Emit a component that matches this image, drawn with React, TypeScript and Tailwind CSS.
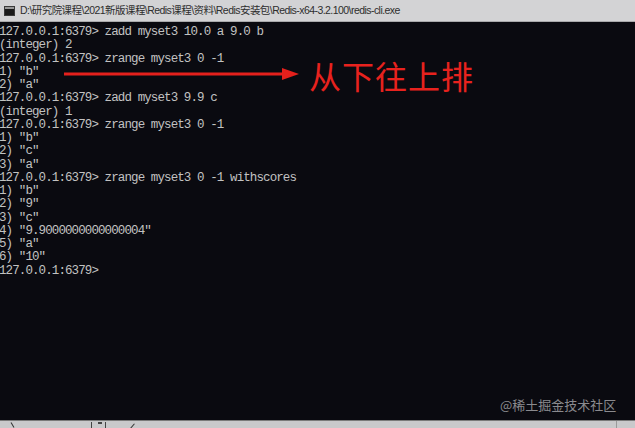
import React from "react";

const lines = [
  "127.0.0.1:6379> zadd myset3 10.0 a 9.0 b",
  "(integer) 2",
  "127.0.0.1:6379> zrange myset3 0 -1",
  '1) "b"',
  '2) "a"',
  "127.0.0.1:6379> zadd myset3 9.9 c",
  "(integer) 1",
  "127.0.0.1:6379> zrange myset3 0 -1",
  '1) "b"',
  '2) "c"',
  '3) "a"',
  "127.0.0.1:6379> zrange myset3 0 -1 withscores",
  '1) "b"',
  '2) "9"',
  '3) "c"',
  '4) "9.9000000000000004"',
  '5) "a"',
  '6) "10"',
  "127.0.0.1:6379>",
];

const App = () => {
  return (
    <div className="relative w-[635px] h-[428px] overflow-hidden flex flex-col bg-[#0a0a10]">
      {/* title bar */}
      <div className="h-[22px] shrink-0 flex items-center gap-[5px] pl-[4px] bg-[#d3d3d5] border-b border-[#a9a9ab]">
        <svg width="11" height="10" viewBox="0 0 11 10">
          <rect x="0" y="0" width="11" height="10" fill="#3a3a3a" />
          <rect x="1" y="1" width="9" height="2" fill="#9a9a9a" />
          <rect x="1" y="3" width="9" height="6" fill="#1a1a1a" />
        </svg>
        <span className="text-[10.5px] text-[#2e2e2e] font-['Liberation_Sans','Noto_Sans_CJK_SC',sans-serif] leading-none tracking-[-0.55px]">
          D:\研究院课程\2021新版课程\Redis课程\资料\Redis安装包\Redis-x64-3.2.100\redis-cli.exe
        </span>
      </div>

      {/* console */}
      <div className="flex-1 pt-[4px] -ml-[1px]">
        {lines.map((l, i) => (
          <div
            key={i}
            className="h-[13.25px] leading-[13.25px] whitespace-pre text-[12.5px] tracking-[-0.9px] text-[#c2c2c2] font-['Liberation_Mono',monospace]"
          >
            {l}
          </div>
        ))}
      </div>

      {/* bottom strip */}
      <div className="h-[8px] shrink-0 bg-[#c9c9cb] border-t border-[#7a7a7a] flex items-start">
        <span className="ml-[12px] mt-[1px] w-[1px] h-[6px] bg-[#333] rotate-[-30deg]" />
        <span className="ml-[78px] mt-[1px] w-[1px] h-[6px] bg-[#444]" />
        <span className="ml-[6px] mt-[1px] w-[4px] h-[2px] bg-[#444]" />
        <span className="ml-[3px] mt-[1px] w-[1px] h-[6px] bg-[#444]" />
        <span className="ml-[26px] mt-[2px] w-[1px] h-[6px] bg-[#333] rotate-[40deg]" />
        <span className="ml-auto mr-[18px] w-[1px] h-[8px] bg-[#999]" />
      </div>

      {/* annotation: arrow + note */}
      <svg
        className="absolute left-[64px] top-[67px]"
        width="236"
        height="14"
        viewBox="0 0 236 14"
      >
        <rect x="0" y="5.5" width="222" height="3" fill="#e4201c" />
        <polygon points="218,1 235,7 218,13" fill="#e4201c" />
      </svg>
      <div className="absolute left-[309px] top-[57px] text-[32px] leading-[37px] text-[#e8221e] font-['Noto_Sans_CJK_SC',sans-serif] tracking-[1px]">
        从下往上排
      </div>

      {/* watermark */}
      <div className="absolute left-[500px] top-[396px] text-[13px] leading-[18px] text-[#8a8a8e] font-['Noto_Sans_CJK_SC',sans-serif]">
        @稀土掘金技术社区
      </div>
    </div>
  );
};

export default App;
